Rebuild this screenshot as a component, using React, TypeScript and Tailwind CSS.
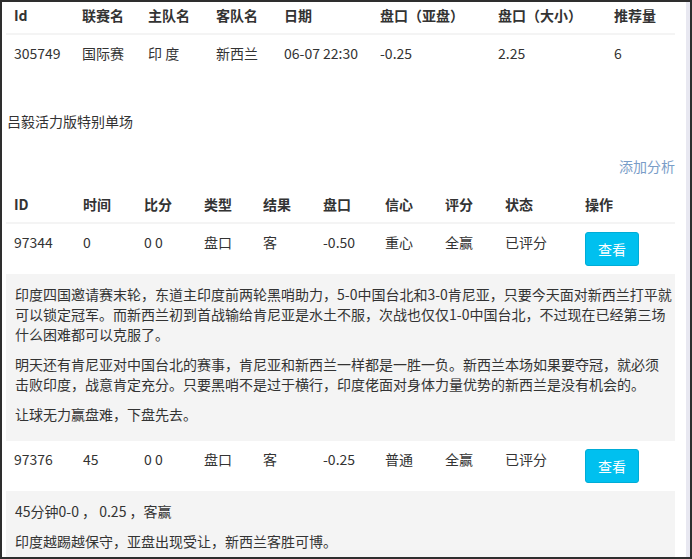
import React from "react";

const t1Cols = "grid grid-cols-[68px_66px_68px_68px_96px_118px_116px_69px]";
const t2Cols = "grid grid-cols-[69px_61px_60px_59px_60px_62px_60px_60px_80px_98px]";

const t1Head = ["Id", "联赛名", "主队名", "客队名", "日期", "盘口（亚盘）", "盘口（大小）", "推荐量"];
const t1Row = ["305749", "国际赛", "印 度", "新西兰", "06-07 22:30", "-0.25", "2.25", "6"];

const t2Head = ["ID", "时间", "比分", "类型", "结果", "盘口", "信心", "评分", "状态", "操作"];

type Rec = { cells: string[]; paras: string[][] };

const recs: Rec[] = [
  {
    cells: ["97344", "0", "0 0", "盘口", "客", "-0.50", "重心", "全赢", "已评分"],
    paras: [
      [
        "印度四国邀请赛末轮，东道主印度前两轮黑哨助力，5-0中国台北和3-0肯尼亚，只要今天面对新西兰打平就",
        "可以锁定冠军。而新西兰初到首战输给肯尼亚是水土不服，次战也仅仅1-0中国台北，不过现在已经第三场",
        "什么困难都可以克服了。",
      ],
      [
        "明天还有肯尼亚对中国台北的赛事，肯尼亚和新西兰一样都是一胜一负。新西兰本场如果要夺冠，就必须",
        "击败印度，战意肯定充分。只要黑哨不是过于横行，印度佬面对身体力量优势的新西兰是没有机会的。",
      ],
      ["让球无力赢盘难，下盘先去。"],
    ],
  },
  {
    cells: ["97376", "45", "0 0", "盘口", "客", "-0.25", "普通", "全赢", "已评分"],
    paras: [["45分钟0-0 ， 0.25 ，客赢"], ["印度越踢越保守，亚盘出现受让，新西兰客胜可博。"]],
  },
];

export default function App() {
  return (
    <div
      className="w-[692px] h-[559px] border-2 border-[#2e2e2e] overflow-hidden flex bg-white text-[14px] leading-[20px] text-[#333]"
      style={{ fontFamily: '"Noto Sans CJK SC", "Open Sans", sans-serif' }}
    >
      <div className="flex-1 pl-[4px] pr-[11px]">
        {/* Top table */}
        <div className={`${t1Cols} pt-[3px] pb-[8px] border-b-2 border-[#f4f4f4] font-bold`}>
          {t1Head.map((h) => (
            <div key={h} className="px-2 whitespace-nowrap">{h}</div>
          ))}
        </div>
        <div className={`${t1Cols} py-2`}>
          {t1Row.map((c, i) => (
            <div key={i} className="px-2 whitespace-nowrap">{c}</div>
          ))}
        </div>

        <div className="mt-[40px] pl-[1px]">吕毅活力版特别单场</div>
        <div className="mt-[25px] text-right text-[#7a9dc8]">添加分析</div>

        {/* Second table */}
        <div className={`${t2Cols} mt-[10px] py-2 border-b-2 border-[#f4f4f4] font-bold`}>
          {t2Head.map((h) => (
            <div key={h} className="px-2 whitespace-nowrap">{h}</div>
          ))}
        </div>
        {recs.map((r, idx) => (
          <div key={idx}>
            <div className={`${t2Cols} py-2 items-start`}>
              {r.cells.map((c, i) => (
                <div key={i} className="px-2 whitespace-nowrap">{c}</div>
              ))}
              <div className="px-2">
                <button className="h-[34px] px-3 rounded-[3px] bg-[#00c0ef] border border-[#00acd6] text-white leading-[20px]">
                  查看
                </button>
              </div>
            </div>
            <div className="bg-[#f4f4f4] pl-[9px] pr-[2px] pt-[10px] pb-[7px]">
              {r.paras.map((lines, i) => (
                <p key={i} className="mb-[10px] whitespace-nowrap">
                  {lines.map((l, j) => (
                    <React.Fragment key={j}>
                      {j > 0 && <br />}
                      {l}
                    </React.Fragment>
                  ))}
                </p>
              ))}
            </div>
          </div>
        ))}
      </div>
      <div className="w-[4px] bg-[#e8e8f1]" />
    </div>
  );
}
